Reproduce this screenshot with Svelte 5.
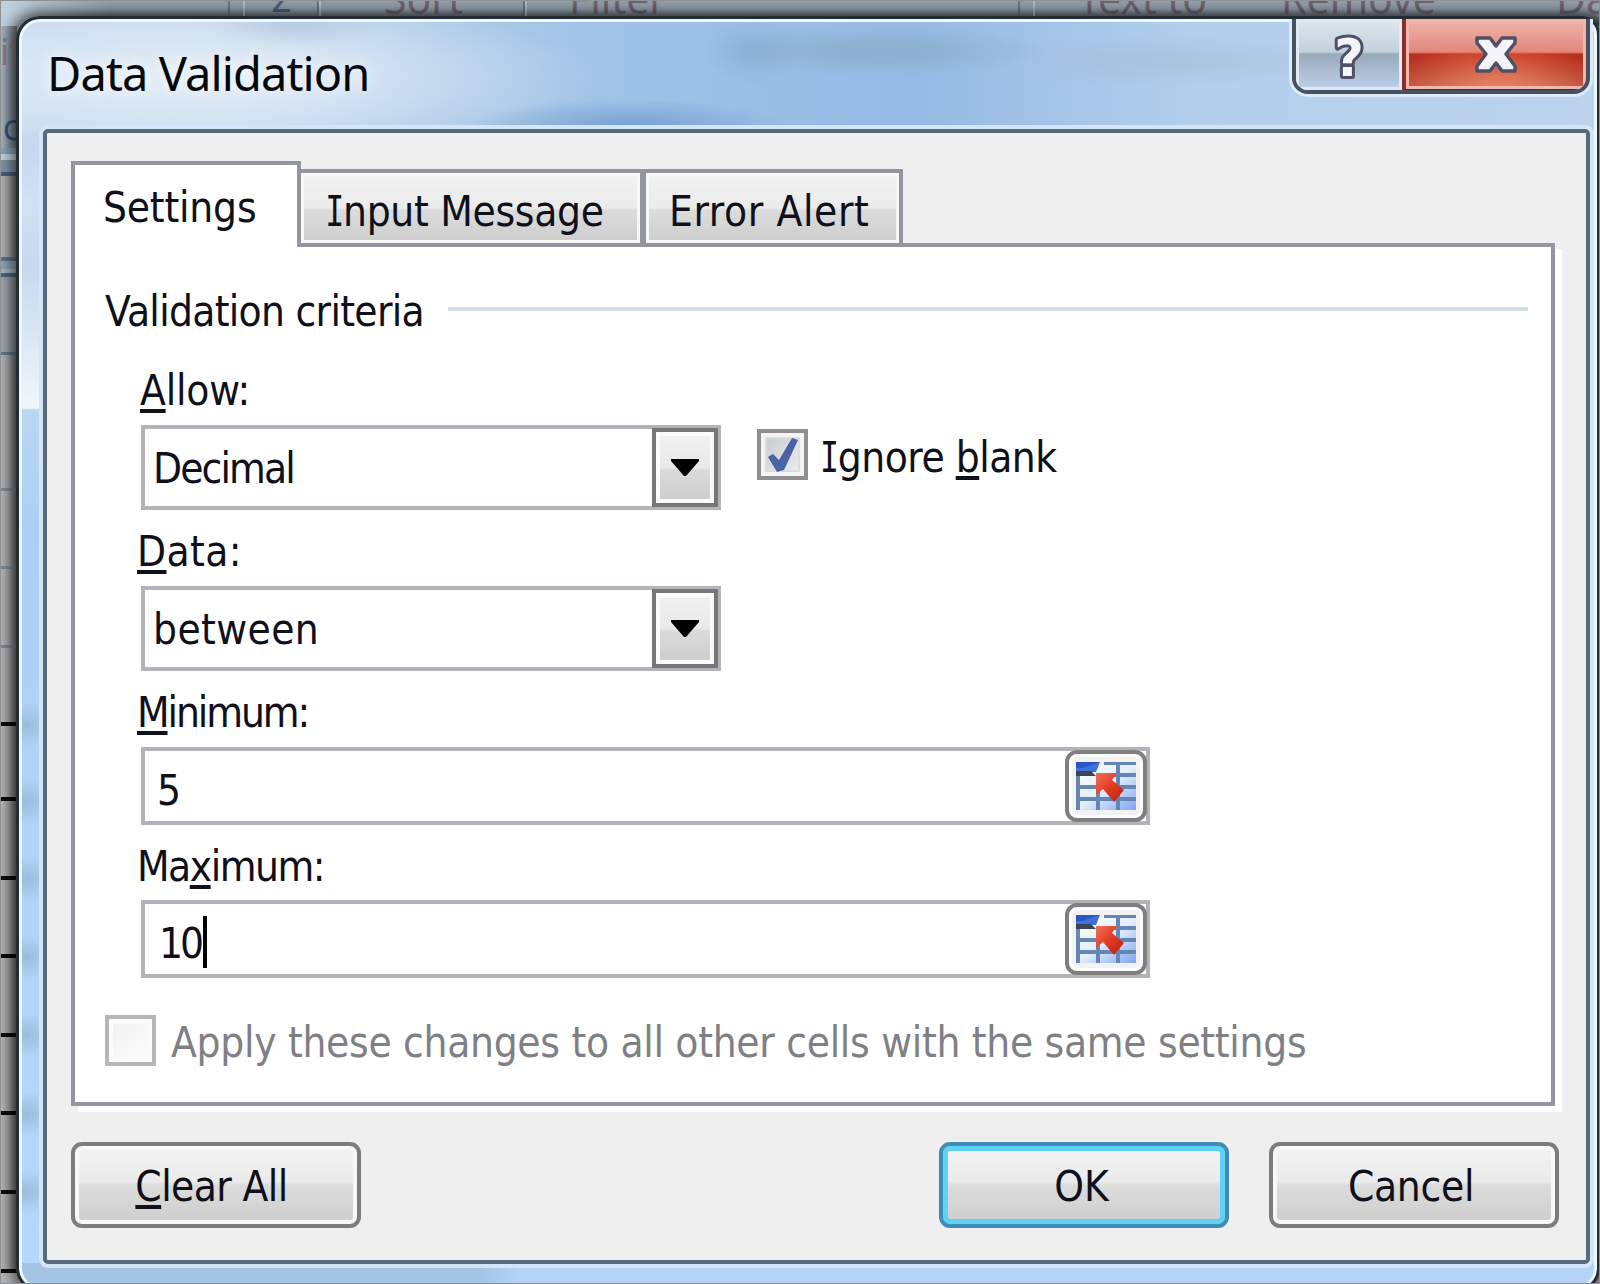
<script lang="ts">
  type Tab = { id: string; label: string };

  const tabs: Tab[] = [
    { id: "settings", label: "Settings" },
    { id: "input", label: "Input Message" },
    { id: "error", label: "Error Alert" },
  ];

  const sheetRows = [136, 78, 79, 78, 75, 79, 78, 79, 78, 79, 79];

  let activeTab = $state("settings");
  let ignoreBlank = $state(true);
  let minimum = $state("5");
  let maximum = $state("10");
</script>

{#snippet combo(value: string)}
  <div class="combo">
    <span class="combo-value {value.toLowerCase()}">{value}</span>
    <button class="combo-arrow" aria-label="Open list">
      <svg width="28" height="17" viewBox="0 0 28 17"><path d="M0 0h28v2L15 17h-2L0 2z" /></svg>
    </button>
  </div>
{/snippet}

{#snippet refPicker()}
  <button class="picker" aria-label="Collapse dialog">
    <svg width="61" height="50" viewBox="0 0 61 50">
      <defs>
        <linearGradient id="cells" x1="0" y1="0" x2="1" y2="1">
          <stop offset="0" stop-color="#fff" />
          <stop offset="0.5" stop-color="#e4eefc" />
          <stop offset="1" stop-color="#7fa4ee" />
        </linearGradient>
        <linearGradient id="arrow" x1="0" y1="0" x2="1" y2="1">
          <stop offset="0" stop-color="#f0705c" />
          <stop offset="0.5" stop-color="#e23a22" />
          <stop offset="1" stop-color="#b3200f" />
        </linearGradient>
      </defs>
      <path d="M0 4H60V49H0z" fill="url(#cells)" />
      <g fill="#6486b4">
        <rect x="28" y="1" width="32" height="3" />
        <rect x="25" y="12" width="35" height="4" />
        <rect y="24" width="60" height="4" />
        <rect y="36" width="60" height="4" />
        <rect x="20" y="26" width="4" height="23" />
        <rect x="40" y="1" width="4" height="48" />
        <rect y="12" width="4" height="37" />
      </g>
      <path d="M0 1H24L20 11H0z" fill="#3f70de" />
      <path d="M0 1H24L6 7H0z" fill="#2a56c4" />
      <path d="M0 10H15L20 15H0z" fill="#3a4656" />
      <path d="M20 12H41L36 19L48 29L38 41L27 28L20 34z" fill="url(#arrow)" />
    </svg>
  </button>
{/snippet}

<div class="desktop">
  <div class="ribbon">
    <i class="rule wide"></i>
    <span class="az">Z</span>
    <i class="rule"></i>
    <span class="sort">Sort</span>
    <i class="rule"></i>
    <span class="filter">Filter</span>
    <i class="rule wide"></i>
    <span class="text-to">Text to</span>
    <span class="remove">Remove</span>
    <span>Da</span>
  </div>
  <div class="sheet">
    <div class="peek"><span>if</span><span class="link">c</span></div>
    <div class="bar"></div>
    <div class="head"></div>
    {#each sheetRows as height, i}
      <div class="row" class:heavy={i > 2} style:height="{height}px"></div>
    {/each}
  </div>

  <div class="dialog" role="dialog" aria-label="Data Validation">
    <header>
      <h1>Data Validation</h1>
      <div class="caption">
        <button class="help" aria-label="Help">
          <svg width="44" height="60" viewBox="0 0 44 60">
            <text x="22" y="51" text-anchor="middle">?</text>
          </svg>
        </button>
        <button class="close" aria-label="Close">
          <svg width="46" height="42" viewBox="0 0 46 42">
            <path
              d="M4 4H17L23 12L29 4H42V9L33 20L42 32V37H29L23 29L17 37H4V32L13 20L4 9z"
              fill="#f4f4f6"
              stroke="#4e5068"
              stroke-width="3.5"
              stroke-linejoin="round"
            />
          </svg>
        </button>
      </div>
    </header>

    <div class="client">
      <div class="tabs" role="tablist">
        {#each tabs as tab}
          <button
            class="tab {tab.id}"
            class:active={tab.id === activeTab}
            role="tab"
            aria-selected={tab.id === activeTab}
            onclick={() => (activeTab = tab.id)}
          >
            {#if tab.label.startsWith("I")}<span class="cap-i">I</span>{tab.label.slice(1)}{:else}{tab.label}{/if}
          </button>
        {/each}
      </div>

      <section class="panel">
        <div class="legend"><span>Validation criteria</span><i></i></div>

        <div class="fields">
          <div class="label allow"><u>A</u>llow:</div>
          <div class="line">
            {@render combo("Decimal")}
            <button class="check-label" onclick={() => (ignoreBlank = !ignoreBlank)}>
              <span class="check">
                {#if ignoreBlank}
                  <svg width="34" height="38" viewBox="0 0 34 38">
                    <path d="M2 21l5-3 6 6L26 2l6 2-14 30-7 2z" fill="#4a63a4" />
                  </svg>
                {/if}
              </span>
              <span class="ignore"><span class="cap-i">I</span>gnore <u>b</u>lank</span>
            </button>
          </div>

          <div class="label data"><u>D</u>ata:</div>
          {@render combo("between")}

          <div class="label min"><u>M</u>inimum:</div>
          <div class="ref">
            <span class="ref-value">{minimum}</span>
            {@render refPicker()}
          </div>

          <div class="label max">Ma<u>x</u>imum:</div>
          <div class="ref">
            <span class="ref-value ten">{maximum}</span><i class="caret"></i>
            {@render refPicker()}
          </div>
        </div>

        <div class="apply">
          <span class="check off"></span>
          <span class="apply-text">Apply these changes to all other cells with the same settings</span>
        </div>
      </section>

      <footer>
        <button class="btn clear"><span><u>C</u>lear All</span></button>
        <button class="btn ok"><span>OK</span></button>
        <button class="btn cancel"><span>Cancel</span></button>
      </footer>
    </div>
  </div>
</div>

<style>
  :global(body) {
    margin: 0;
  }

  .desktop {
    position: relative;
    box-sizing: border-box;
    width: 1600px;
    height: 1284px;
    overflow: hidden;
    background: #b4b4b4;
    font: 42px "DejaVu Sans Condensed", "DejaVu Sans", sans-serif;
    font-stretch: condensed;
    color: #10101a;
  }

  .desktop::after {
    content: "";
    position: absolute;
    inset: 0;
    border: 1px solid #8d9093;
    pointer-events: none;
  }

  button {
    padding: 0;
    border: 0;
    font: inherit;
    letter-spacing: inherit;
    color: inherit;
    background: none;
    white-space: nowrap;
  }

  svg {
    display: block;
  }

  u {
    text-decoration: underline 4px;
    text-underline-offset: 4px;
    text-decoration-skip-ink: none;
  }

  /* window behind the dialog */
  .ribbon {
    display: flex;
    box-sizing: border-box;
    height: 26px;
    padding-left: 228px;
    color: #756670;
    font-family: "Noto Sans", sans-serif;
    font-size: 41px;
    line-height: 1;
    background:
      linear-gradient(90deg, #c3d2e0, transparent 110px),
      linear-gradient(#93a0ac, #98a5b0 35%, #6f7a84 65%, #3e464e);
  }

  .ribbon span {
    flex: none;
    margin-top: -22px;
    white-space: nowrap;
  }

  .rule {
    flex: none;
    box-sizing: border-box;
    width: 4px;
    height: 20px;
    border-left: 2px solid #6b7a8a;
    border-right: 2px solid #b6c1cb;
  }

  .rule.wide {
    width: 17px;
  }

  .ribbon .az {
    width: 44px;
    margin-left: 28px;
    color: #53627c;
    font-size: 38px;
    font-style: italic;
  }

  .sort {
    width: 139px;
    margin-left: 63px;
  }

  .filter {
    width: 449px;
    margin-left: 42px;
  }

  .text-to {
    width: 203px;
    margin-left: 43px;
  }

  .remove {
    width: 275px;
  }

  .sheet {
    width: 17px;
    overflow: hidden;
    background: linear-gradient(90deg, #b8b8b8, #a2a2a2 50%, #6e6e6e);
  }

  .peek {
    box-sizing: border-box;
    height: 132px;
    margin-top: -10px;
    padding-top: 12px;
    font-size: 36px;
    color: #8a7680;
    background: linear-gradient(90deg, #a9b7c3, #67727c);
  }

  .peek span {
    display: block;
    height: 80px;
    line-height: 50px;
  }

  .peek .link {
    margin-left: 3px;
    color: #35507c;
    line-height: 40px;
  }

  .bar {
    height: 31px;
    background: linear-gradient(#8ba0b2 0 6px, #c0d0dc 6px 12px, #7d93a8 12px 24px, #46607c 24px 28px, transparent 28px);
  }

  .head {
    height: 176px;
    background: linear-gradient(transparent 78px, #58708a 78px 82px, #8fa0b0 82px 90px, #a5b2be 90px 94px, #4c637d 94px 98px, #8d96a188 98px 173px, #5f7488 173px);
  }

  .row {
    box-sizing: border-box;
    border-bottom: 3px solid #7d868f;
  }

  .row.heavy {
    border-bottom: 4px solid #0c0c0c;
  }

  .dialog {
    position: absolute;
    top: 16px;
    left: 16px;
    box-sizing: border-box;
    width: 1584px;
    height: 1276px;
    padding-left: 24px;
    border: 3px solid #242c34;
    border-radius: 24px 18px 24px 24px;
    background:
      radial-gradient(ellipse 170px 26px at 860px 32px, #8aabc8bb 20%, transparent),
      radial-gradient(ellipse 50px 34px at 735px 32px, #85a8d088 10%, transparent),
      radial-gradient(ellipse 160px 28px at 610px 108px, #6c98cacc, transparent),
      radial-gradient(ellipse 190px 26px at 1140px 42px, #a5bcd688 20%, transparent),
      radial-gradient(ellipse 90px 24px at 275px 4px, #a9bcd499, transparent),
      radial-gradient(ellipse 420px 80px at 160px 58px, #e2ecf6 10%, transparent),
      linear-gradient(90deg, #c6d9ee, #c4d8ed 260px, #adcbe8 430px, #9ec1e7 620px, #96bae4 900px, #b3cfec 1180px, #bcd3ec) 0 0 / 100% 113px no-repeat,
      radial-gradient(ellipse 30px 22px at 8px 706px, #9dbcdc, transparent),
      radial-gradient(ellipse 30px 22px at 8px 782px, #9dbcdc, transparent),
      radial-gradient(ellipse 30px 22px at 8px 860px, #9dbcdc, transparent),
      radial-gradient(ellipse 30px 22px at 8px 938px, #9dbcdc, transparent),
      radial-gradient(ellipse 30px 22px at 8px 1016px, #9dbcdc, transparent),
      radial-gradient(ellipse 30px 22px at 8px 1095px, #9dbcdc, transparent),
      radial-gradient(ellipse 30px 22px at 8px 1173px, #9dbcdc, transparent),
      linear-gradient(90deg, #a4c4e4 0 460px, #b4d3f5 500px) 0 100% / 100% 26px no-repeat,
      linear-gradient(#c0d5ec 113px, #d0e2f4 180px, #c6daed 250px, #dbe8f4 320px, #f1f6fc 389px, #bad6f1 391px, #acd0f5 500px, #b5d7fb);
    box-shadow:
      inset 0 0 0 3px #eef6ff,
      0 0 14px 4px #0009;
  }

  header {
    display: flex;
    justify-content: space-between;
    height: 110px;
  }

  h1 {
    margin: 0;
    padding: 21px 0 0 4px;
    font: 400 47px/66px "Noto Sans", "Open Sans", sans-serif;
    letter-spacing: -0.9px;
    color: #05080c;
    text-shadow: 0 0 14px #fff;
  }

  .caption {
    display: flex;
    box-sizing: border-box;
    width: 298px;
    height: 75px;
    margin-right: 7px;
    border: 4px solid #46535f;
    border-top: 0;
    border-radius: 0 0 16px 16px;
    overflow: hidden;
    box-shadow: 0 0 0 3px #dceafa;
    clip-path: inset(0 -4px -4px -4px);
  }

  .help {
    display: flex;
    align-items: center;
    justify-content: center;
    box-sizing: border-box;
    width: 106px;
    background: linear-gradient(#dfe7ee, #c2d0dc 33px, #98a9b9 35px, #a9bacd 50px, #bed0e8);
    box-shadow: inset 0 0 0 3px #dfeaf4;
  }

  .help text {
    font: 700 51px "DejaVu Sans", sans-serif;
    fill: #f4f4f6;
    stroke: #4e5068;
    stroke-width: 6px;
    stroke-linejoin: round;
    paint-order: stroke;
  }

  .close {
    display: flex;
    flex: 1;
    align-items: center;
    justify-content: center;
    border-left: 4px solid #8a2f28;
    border-bottom: 1px solid #6b1f1a;
    background:
      radial-gradient(ellipse 110px 40px at 50% 62px, #e88a6299, transparent),
      linear-gradient(90deg, #8e1a1066, transparent 45%, transparent 60%, #8e1a1066) 0 35px / 100% 40px no-repeat,
      linear-gradient(#f2b4ac, #e2877c 33px, #c83722 35px, #cd4a34 50px, #d87c64);
    box-shadow: inset 0 0 0 3px #f0b7ae;
  }

  .close svg {
    margin-top: 1px;
  }

  .client {
    box-sizing: border-box;
    width: 1547px;
    height: 1135px;
    padding: 28px 0 0 24px;
    border: 4px solid #586a7c;
    border-radius: 5px;
    background: #efefef;
    box-shadow: 0 0 0 4px #d3e5f7;
  }

  .tabs {
    display: flex;
    align-items: flex-end;
    height: 82px;
  }

  .tab {
    position: relative;
    z-index: 1;
    box-sizing: border-box;
    height: 78px;
    margin-bottom: -4px;
    border: 4px solid #9395a0;
    text-align: left;
    line-height: 78px;
    background: linear-gradient(#f3f3f3, #ebebeb 50%, #dcdcdc 53%, #cdcdcd);
    box-shadow: inset 0 0 0 3px #f8f8f8;
  }

  .tab.active {
    z-index: 2;
    height: 86px;
    border-bottom: 0;
    line-height: 86px;
    background: #fff;
    box-shadow: none;
  }

  .tab.settings {
    width: 230px;
    padding-left: 28px;
    letter-spacing: -0.2px;
  }

  .tab.input {
    width: 347px;
    margin-left: -4px;
    padding-left: 26px;
    letter-spacing: -0.3px;
  }

  .tab.error {
    width: 261px;
    margin-left: -2px;
    padding-left: 23px;
    letter-spacing: 0.6px;
  }

  /* capital I with serifs, narrowed to the dialog font */
  .cap-i {
    display: inline-block;
    margin: 0 -4px 0 -5px;
    font-family: "DejaVu Sans Mono", monospace;
    transform: scaleX(0.75);
  }

  .panel {
    box-sizing: border-box;
    width: 1484px;
    height: 863px;
    padding: 40px 0 0 30px;
    border: 4px solid #9395a0;
    background: #fff;
    box-shadow: 7px 6px 0 #fff;
  }

  .legend {
    display: flex;
    align-items: center;
    height: 50px;
    letter-spacing: -0.7px;
    line-height: 50px;
  }

  .legend span {
    width: 343px;
    white-space: nowrap;
  }

  .legend i {
    width: 1080px;
    height: 4px;
    margin-bottom: 7px;
    background: #d3dfe8;
  }

  .fields {
    padding: 12px 0 0 36px;
  }

  .label {
    box-sizing: border-box;
    height: 76px;
    margin-left: -4px;
    padding-top: 6px;
    line-height: 72px;
  }

  .label.allow {
    margin-left: -1px;
    letter-spacing: -0.2px;
  }

  .label.data {
    letter-spacing: 0.4px;
  }

  .label.min {
    letter-spacing: -2.1px;
  }

  .label.max {
    height: 75px;
    letter-spacing: -1.5px;
  }

  .line {
    display: flex;
    gap: 36px;
  }

  .combo {
    display: flex;
    box-sizing: border-box;
    width: 580px;
    height: 85px;
    border: 4px solid #b2b2b9;
  }

  .combo-value {
    flex: 1;
    padding: 1px 0 0 8px;
    line-height: 77px;
  }

  .combo-value.decimal {
    letter-spacing: -1.9px;
  }

  .combo-value.between {
    letter-spacing: 0.4px;
  }

  .combo-arrow {
    display: flex;
    align-items: center;
    justify-content: center;
    box-sizing: border-box;
    width: 66px;
    height: 79px;
    margin: -1px -1px 0 0;
    border: 4px solid #777;
    background: linear-gradient(#f2f2f2, #e9e9e9 50%, #dadada 54%, #cdcdcd);
    box-shadow: inset 0 0 0 4px #fbfbfb;
  }

  .check-label {
    display: flex;
    gap: 14px;
    height: 60px;
    padding-top: 4px;
    letter-spacing: -0.5px;
  }

  .ignore {
    line-height: 57px;
  }

  .check {
    display: flex;
    align-items: center;
    justify-content: center;
    flex: none;
    box-sizing: border-box;
    width: 51px;
    height: 51px;
    border: 4px solid #8f8f8f;
    background: linear-gradient(135deg, #c3c8d0, #f0f0f0);
    box-shadow:
      inset 0 0 0 4px #f4f4f4,
      inset 0 0 0 6px #dcdcdc;
  }

  .check.off {
    border-color: #b6b6b6;
    background: linear-gradient(135deg, #f1f1f1, #fdfdfd);
    box-shadow: inset 0 0 0 4px #fbfbfb;
  }

  .ref {
    display: flex;
    align-items: center;
    box-sizing: border-box;
    width: 1009px;
    height: 78px;
    border: 4px solid #b2b2b9;
  }

  .ref-value {
    padding: 9px 0 0 12px;
    line-height: 65px;
  }

  .ref-value.ten {
    padding-left: 14px;
    letter-spacing: -3px;
  }

  .caret {
    width: 4px;
    height: 52px;
    margin: 5px 0 0 2px;
    background: #000;
  }

  .picker {
    display: flex;
    align-items: center;
    justify-content: center;
    box-sizing: border-box;
    width: 82px;
    height: 72px;
    margin: 0 -1px 0 auto;
    border: 4px solid #7f7f7f;
    border-radius: 12px;
    background: #f2f2f2;
    box-shadow: inset 0 0 0 3px #fcfcfc;
  }

  .apply {
    display: flex;
    align-items: center;
    gap: 15px;
    margin-top: 36px;
    color: #7f7f86;
  }

  .apply-text {
    padding-top: 5px;
    letter-spacing: -0.3px;
    line-height: 48px;
    white-space: nowrap;
  }

  footer {
    display: flex;
    padding-top: 36px;
  }

  .btn {
    box-sizing: border-box;
    width: 290px;
    height: 86px;
    border: 4px solid #7c7c7c;
    border-radius: 11px;
    line-height: 81px;
    background: linear-gradient(#f3f3f3, #ebebeb 46%, #dcdcdc 50%, #cdcdcd);
    box-shadow: inset 0 0 0 4px #f8f8f8;
  }

  .btn.clear {
    margin-right: 578px;
    letter-spacing: -0.6px;
  }

  .btn.clear span {
    margin-right: 9px;
  }

  .btn.ok {
    margin-right: 40px;
    border-color: #3f8cb8;
    letter-spacing: 0;
    box-shadow: inset 0 0 0 5px #5fd3f3;
  }

  .btn.ok span {
    margin-right: 5px;
  }

  .btn.cancel {
    letter-spacing: -0.3px;
  }

  .btn.cancel span {
    margin-right: 6px;
  }
</style>
